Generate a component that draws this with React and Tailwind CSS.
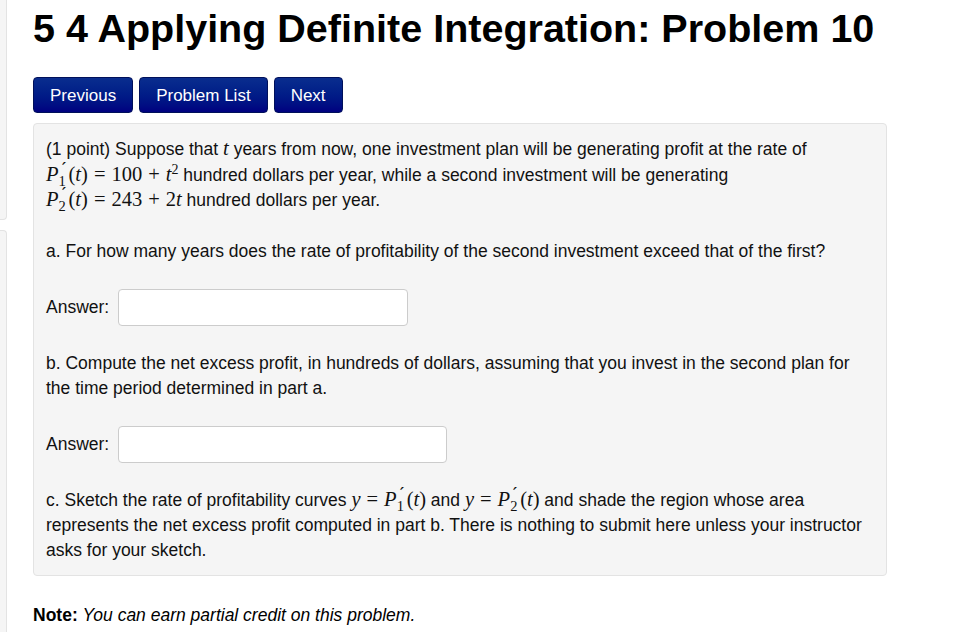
import React from 'react';

const serif = "font-['Liberation_Serif','DejaVu_Serif',serif]";

const Pt = ({ n }) => (
  <span className={`${serif} text-[20.5px] leading-none whitespace-nowrap`}>
    <i>P</i>
    <span className="relative inline-block w-[10px]">
      <span className="absolute left-[2px] top-[-3px] text-[15px] leading-none font-['DejaVu_Sans',sans-serif] font-bold -skew-x-12">′</span>
      <span className="relative top-[5px] text-[14.5px] leading-none">{n}</span>
    </span>
    <span>(</span>
    <i>t</i>
    <span>)</span>
  </span>
);

const MathText = ({ children }) => (
  <span className={`${serif} text-[20.5px] leading-none whitespace-nowrap`}>{children}</span>
);

const Op = ({ children }) => <span className="mx-[6px]">{children}</span>;

const NavButton = ({ children }) => (
  <button className="h-[36px] px-[16px] rounded-[4px] border border-[#00105a] bg-gradient-to-b from-[#0a2d8e] to-[#000080] text-white text-[17px] leading-none">
    {children}
  </button>
);

const AnswerRow = ({ width }) => (
  <div className="flex items-center gap-[9px] mt-[25px]">
    <span>Answer:</span>
    <div
      className="h-[37px] bg-white border border-[#cccccc] rounded-[4px]"
      style={{ width }}
    />
  </div>
);

export default function App() {
  return (
    <div className="min-h-screen flex bg-white text-[#000] font-['Liberation_Sans',Arial,sans-serif]">
      <div className="w-[7px] shrink-0 flex flex-col gap-[10px]">
        <div className="h-[220px] bg-[#f5f5f5] border-r border-b border-[#e3e3e3] rounded-br-[4px]" />
        <div className="flex-1 bg-[#f5f5f5] border-r border-t border-[#e3e3e3] rounded-tr-[4px]" />
      </div>

      <div className="pl-[26px] pt-[7px] w-[900px]">
        <h1 className="text-[39.5px] font-bold leading-[42px] whitespace-nowrap">
          5 4 Applying Definite Integration: Problem 10
        </h1>

        <div className="flex gap-[6px] mt-[28px]">
          <NavButton>Previous</NavButton>
          <NavButton>Problem List</NavButton>
          <NavButton>Next</NavButton>
        </div>

        <div className="mt-[10px] w-[854px] bg-[#f5f5f5] border border-[#e3e3e3] rounded-[4px] px-[12px] pt-[13px] pb-[12px] text-[17.5px] leading-[25px] text-[#111]">
          <p className="leading-[25.5px]">
            (1 point) Suppose that <MathText><i>t</i></MathText> years from now, one investment plan will be
            generating profit at the rate of
            <br />
            <Pt n="1" />
            <MathText>
              <Op>=</Op>100<Op>+</Op><i>t</i>
              <sup className="text-[14px] leading-none">2</sup>
            </MathText>{' '}
            hundred dollars per year, while a second investment will be generating
            <br />
            <Pt n="2" />
            <MathText>
              <Op>=</Op>243<Op>+</Op>2<i>t</i>
            </MathText>{' '}
            hundred dollars per year.
          </p>

          <p className="mt-[25px]">
            a. For how many years does the rate of profitability of the second investment exceed that of the
            first?
          </p>

          <AnswerRow width={290} />

          <p className="mt-[25px]">
            b. Compute the net excess profit, in hundreds of dollars, assuming that you invest in the second plan
            for
            <br />
            the time period determined in part a.
          </p>

          <AnswerRow width={329} />

          <p className="mt-[25px]">
            c. Sketch the rate of profitability curves{' '}
            <MathText>
              <i>y</i>
              <Op>=</Op>
            </MathText>
            <Pt n="1" /> and{' '}
            <MathText>
              <i>y</i>
              <Op>=</Op>
            </MathText>
            <Pt n="2" /> and shade the region whose area
            <br />
            represents the net excess profit computed in part b. There is nothing to submit here unless your
            instructor
            <br />
            asks for your sketch.
          </p>
        </div>

        <p className="mt-[27px] text-[17.5px] leading-[25px]">
          <b>Note:</b> <i>You can earn partial credit on this problem.</i>
        </p>
      </div>
    </div>
  );
}
